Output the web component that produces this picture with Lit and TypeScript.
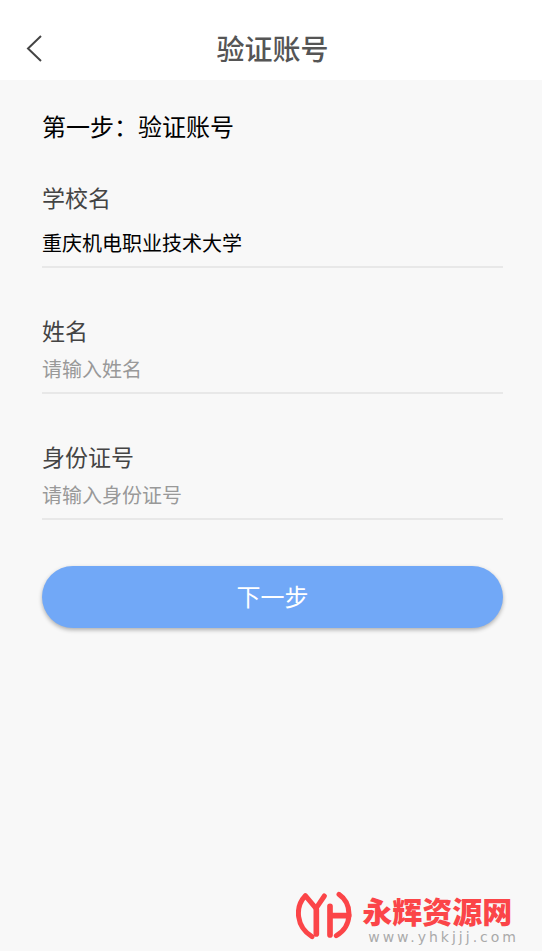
import { LitElement, html, css } from "lit";
import { customElement, property } from "lit/decorators.js";

@customElement("form-field")
class FormField extends LitElement {
  @property() label = "";
  @property() value = "";
  @property() placeholder = "";

  static styles = css`
    :host {
      display: flex;
      flex-direction: column;
      gap: var(--field-gap, 0);
      border-bottom: 2px solid #e8e8e8;
    }
    .label {
      font-size: 23px;
      line-height: 30px;
      color: #444;
    }
    .input {
      width: 100%;
      height: 47px;
      box-sizing: border-box;
      padding: 0;
      border: 0;
      outline: 0;
      background: transparent;
      font: inherit;
      font-size: 20px;
      color: #000;
    }
    .input::placeholder {
      color: #999;
      opacity: 1;
    }
  `;

  render() {
    return html`
      <label class="label" for="control">${this.label}</label>
      <input class="input" id="control" type="text" .value=${this.value} placeholder=${this.placeholder} />
    `;
  }
}

@customElement("app-root")
class AppRoot extends LitElement {
  static styles = css`
    :host {
      display: flex;
      flex-direction: column;
      min-height: 100vh;
      background: #f8f8f8;
      font-family: "Noto Sans CJK SC", sans-serif;
      color: #000;
    }
    .header {
      display: grid;
      grid-template-columns: 68px 1fr 65px;
      align-items: center;
      height: 80px;
      background: #fff;
    }
    .back {
      display: flex;
      justify-content: center;
      align-items: center;
      height: 48px;
      margin-top: 16px;
      padding: 0;
      border: 0;
      background: none;
    }
    .title {
      margin: 16px 0 0;
      text-align: center;
      font-size: 28px;
      line-height: 40px;
      font-weight: 500;
      color: #555;
    }
    .form {
      display: flex;
      flex-direction: column;
      padding: 28px 39px 32px 42px;
    }
    .step {
      margin: 0 0 38px;
      font-size: 24px;
      line-height: 36px;
      font-weight: 400;
    }
    .fields {
      display: flex;
      flex-direction: column;
      gap: 47px;
      margin-bottom: 46px;
    }
    .school {
      --field-gap: 7px;
    }
    .next {
      height: 62px;
      padding: 0 0 4px;
      border: 0;
      border-radius: 31px;
      background: #71a8f7;
      box-shadow: 0 2px 4px rgba(0, 0, 0, 0.3);
      font: inherit;
      font-size: 24px;
      color: #fff;
    }
    .brand {
      display: flex;
      align-items: flex-end;
      justify-content: flex-end;
      gap: 10px;
      margin-top: auto;
      padding: 0 23px 6px 0;
    }
    .logo {
      margin-bottom: 4px;
    }
    .words {
      display: flex;
      flex-direction: column;
    }
    .name {
      font-size: 30px;
      line-height: 38px;
      font-weight: 900;
      color: #fb4548;
    }
    .site {
      padding-left: 6px;
      font-family: "DejaVu Sans", sans-serif;
      font-size: 14px;
      line-height: 16px;
      letter-spacing: 3px;
      color: #aaa;
      text-decoration: none;
    }
  `;

  render() {
    return html`
      <header class="header">
        <button class="back" type="button" aria-label="返回">
          <svg width="18" height="28" viewBox="0 0 18 28" fill="none" stroke="#444" stroke-width="2">
            <path d="M16 2 L3 14.500 L16 27" />
          </svg>
        </button>
        <h1 class="title">验证账号</h1>
      </header>
      <form class="form">
        <h2 class="step">第一步：验证账号</h2>
        <div class="fields">
          <form-field class="school" label="学校名" value="重庆机电职业技术大学"></form-field>
          <form-field label="姓名" placeholder="请输入姓名"></form-field>
          <form-field label="身份证号" placeholder="请输入身份证号"></form-field>
        </div>
        <button class="next" type="button">下一步</button>
      </form>
      <footer class="brand">
        <svg class="logo" width="56" height="50" viewBox="18 18 168 150" fill="none" stroke="#fb4548" stroke-width="15" stroke-linecap="round" stroke-linejoin="round" aria-hidden="true">
          <path d="M66 155 C18 126 14 66 46 32 L78 70 L103 33" />
          <path d="M147 28 C188 56 188 124 139 152" />
          <path d="M79 74 V147 M120 64 V150 M120 92 H176" stroke-width="17" />
        </svg>
        <div class="words">
          <span class="name">永辉资源网</span>
          <a class="site" href="#">www.yhkjjj.com</a>
        </div>
      </footer>
    `;
  }
}
